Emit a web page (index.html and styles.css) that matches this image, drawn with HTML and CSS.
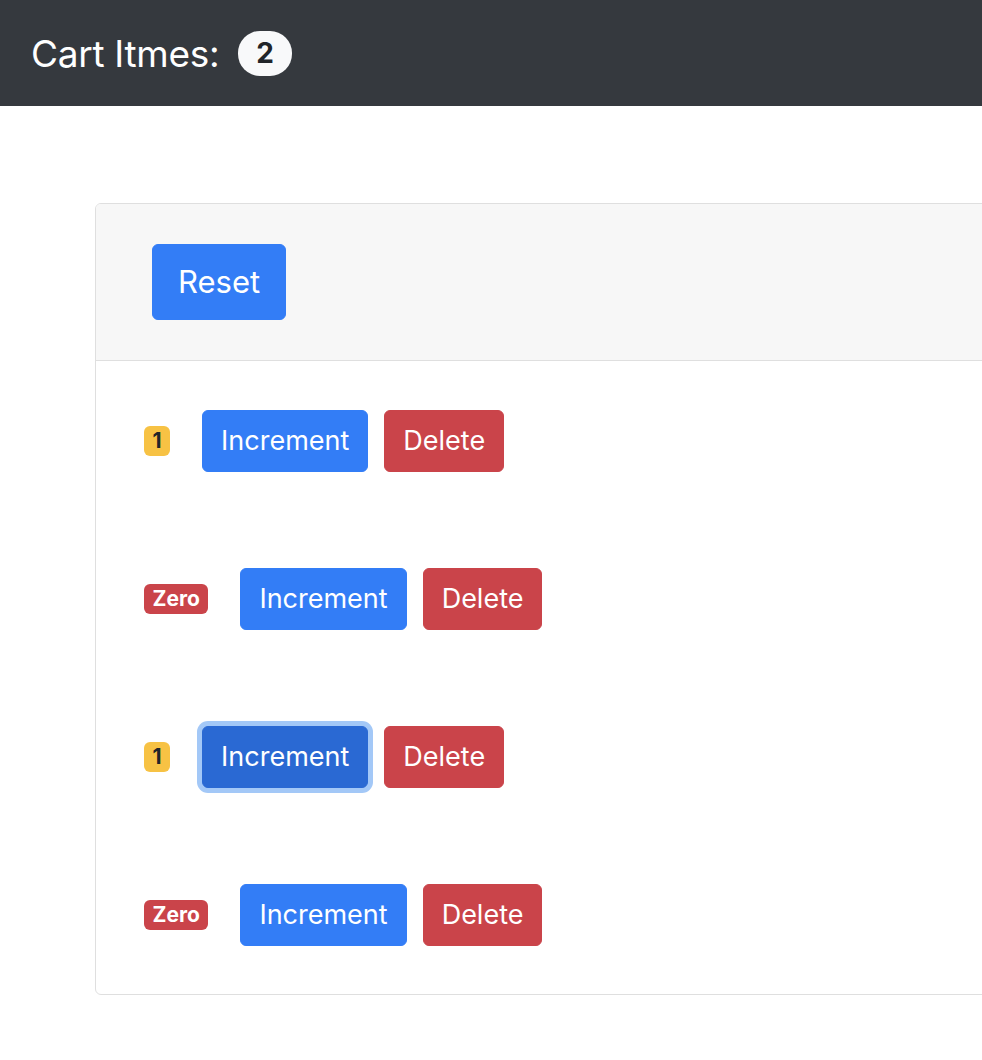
FILE: index.html
```html
<!DOCTYPE html>
<html lang="en">
<head>
<meta charset="utf-8">
<title>Cart</title>
<link rel="stylesheet" href="styles.css">
</head>
<body>
<nav class="navbar">
  <span class="brand">Cart Itmes:</span>
  <span class="pill">2</span>
</nav>
<div class="card">
  <div class="card-header">
    <button class="btn btn-primary btn-lg">Reset</button>
  </div>
  <div class="card-body">
    <div class="row">
      <span class="badge badge-warning">1</span>
      <button class="btn btn-primary">Increment</button>
      <button class="btn btn-danger">Delete</button>
    </div>
    <div class="row">
      <span class="badge badge-danger">Zero</span>
      <button class="btn btn-primary">Increment</button>
      <button class="btn btn-danger">Delete</button>
    </div>
    <div class="row">
      <span class="badge badge-warning">1</span>
      <button class="btn btn-primary focused">Increment</button>
      <button class="btn btn-danger">Delete</button>
    </div>
    <div class="row">
      <span class="badge badge-danger">Zero</span>
      <button class="btn btn-primary">Increment</button>
      <button class="btn btn-danger">Delete</button>
    </div>
  </div>
</div>
</body>
</html>
```
FILE: styles.css
```css
html, body {
  margin: 0;
  padding: 0;
  overflow-x: hidden;
}
body {
  font-family: Inter, "Noto Sans", "Liberation Sans", sans-serif;
  color: #212529;
  background: #fff;
}
.navbar {
  height: 106px;
  background: #35393e;
  display: flex;
  align-items: center;
  padding-left: 31px;
  box-sizing: border-box;
}
.brand {
  color: #fff;
  font-size: 37px;
  font-weight: 400;
  letter-spacing: -0.3px;
}
.pill {
  margin-left: 19px;
  background: #f8f9fa;
  color: #212529;
  font-weight: 700;
  font-size: 28px;
  line-height: 28px;
  padding: 8px 18px 9px;
  border-radius: 22px;
}
.card {
  margin: 97px -40px 0 95px;
  border: 1px solid #dfdfdf;
  border-radius: 6px;
  overflow: hidden;
}
.card-header {
  background: #f7f7f7;
  border-bottom: 1px solid #dfdfdf;
  padding: 40px 56px;
}
.card-body {
  padding: 49px 48px 48px;
  display: flex;
  flex-direction: column;
  gap: 96px;
}
.row {
  display: flex;
  align-items: center;
}
.btn {
  font-family: inherit;
  color: #fff;
  border: 1px solid transparent;
  border-radius: 6px;
  font-size: 27px;
  line-height: 38px;
  padding: 11px 18px;
  margin: 0;
  cursor: pointer;
}
.btn-lg {
  font-size: 31px;
  line-height: 44px;
  padding: 15px 25px;
}
.btn-primary {
  background: #337df6;
  border-color: #337df6;
}
.btn-danger {
  background: #ca444a;
  border-color: #ca444a;
  margin-left: 16px;
}
.focused {
  background: #2a69d3;
  border-color: #2a69d3;
  box-shadow: 0 0 0 5px #a3c8f7;
}
.badge {
  font-weight: 700;
  font-size: 21px;
  line-height: 20px;
  padding: 5px 8.5px;
  border-radius: 6px;
  margin-right: 32px;
}
.badge-warning {
  background: #f7c244;
  color: #212529;
}
.badge-danger {
  background: #ca444a;
  color: #fff;
}
```
